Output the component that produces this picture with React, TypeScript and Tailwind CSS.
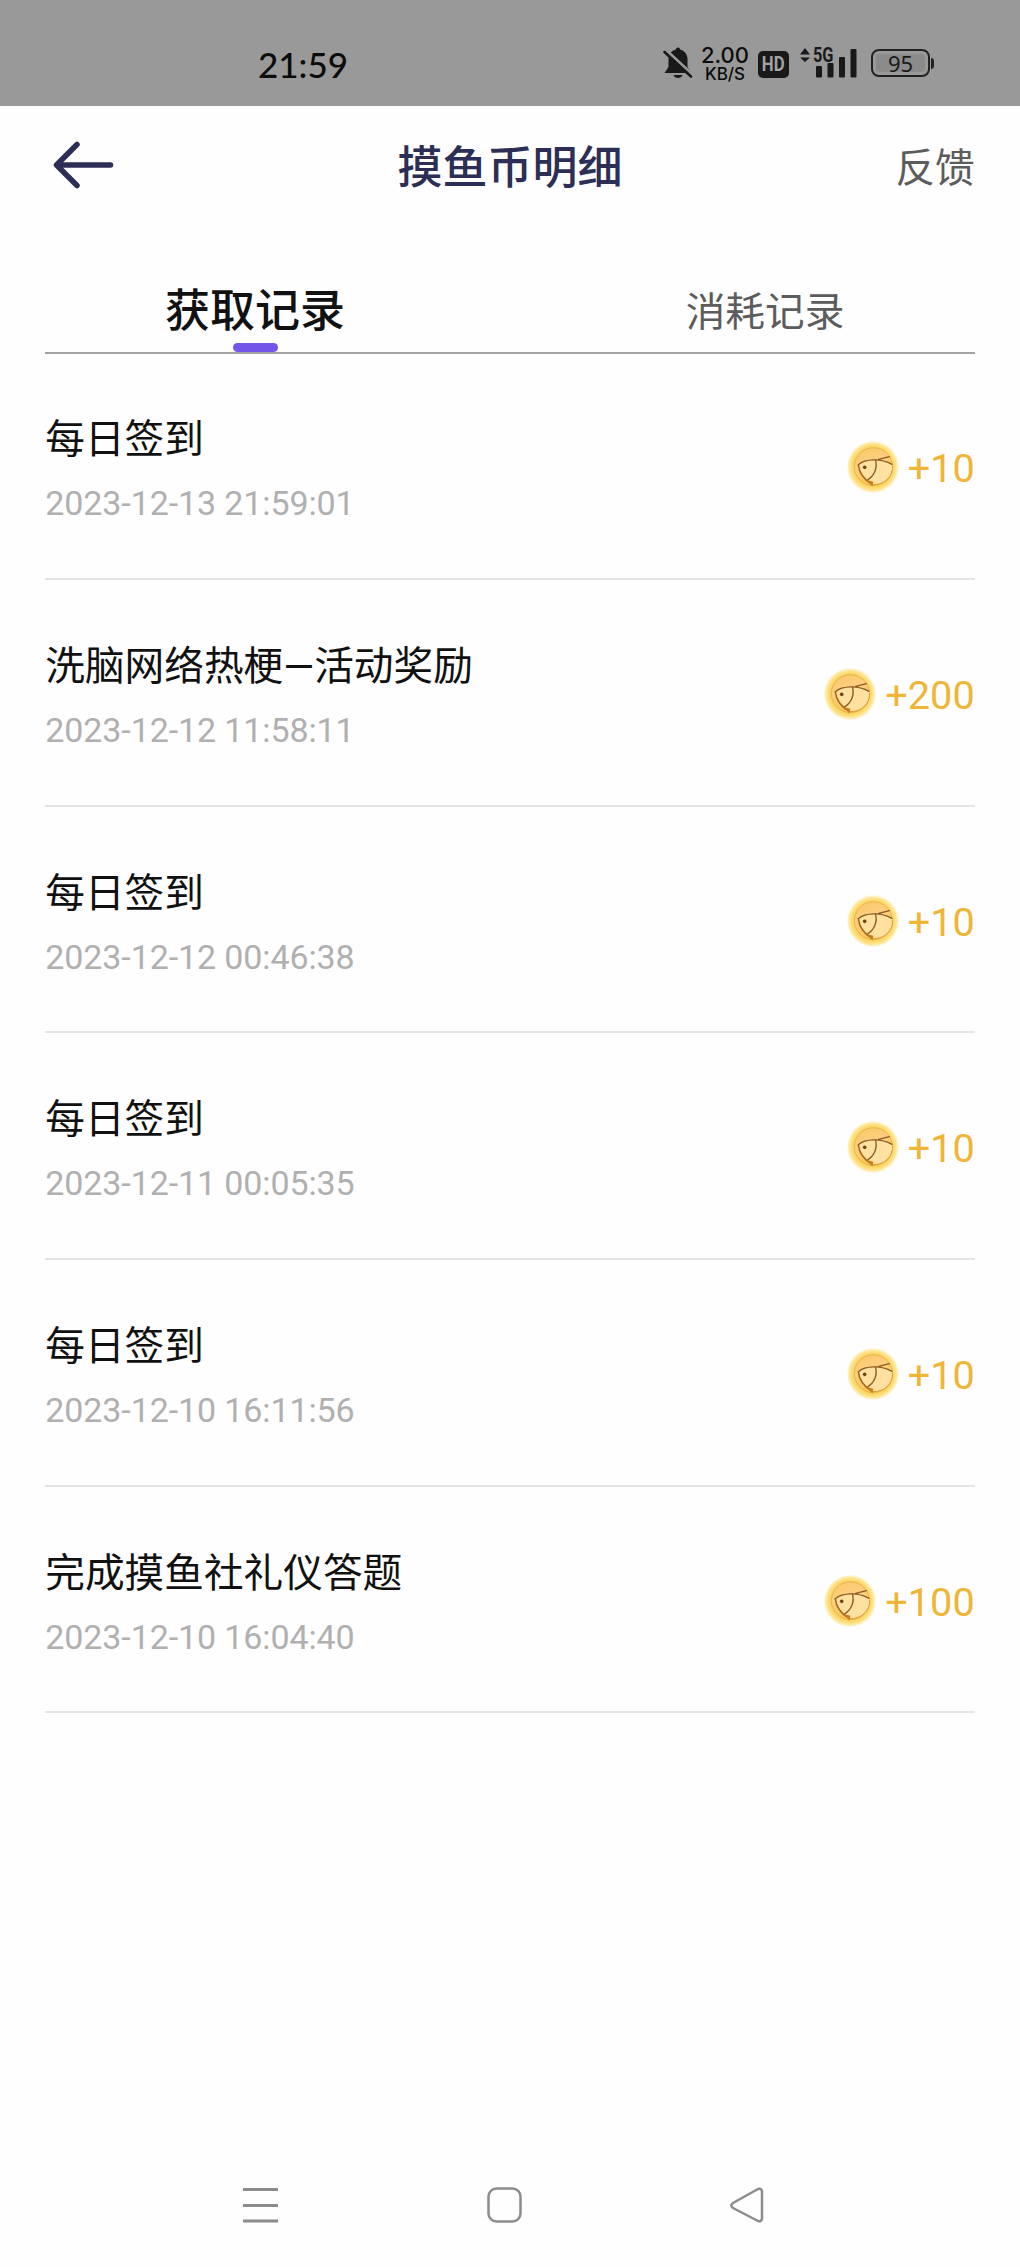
const records = [
  { title: "每日签到", time: "2023-12-13 21:59:01", amount: "+10" },
  { title: "洗脑网络热梗—活动奖励", time: "2023-12-12 11:58:11", amount: "+200" },
  { title: "每日签到", time: "2023-12-12 00:46:38", amount: "+10" },
  { title: "每日签到", time: "2023-12-11 00:05:35", amount: "+10" },
  { title: "每日签到", time: "2023-12-10 16:11:56", amount: "+10" },
  { title: "完成摸鱼社礼仪答题", time: "2023-12-10 16:04:40", amount: "+100" },
];

function StatusBar() {
  return (
    <header className="flex h-[105.5px] items-start bg-[#999999] text-[#0c0c0c]">
      <span className="ml-[258px] mt-[40px] w-[92px] whitespace-nowrap font-['Lato'] text-[35px] font-medium leading-[48px]">
        21:59
      </span>
      <svg className="ml-[312px] mt-[46px] shrink-0" width="32" height="34" viewBox="0 0 32 34">
        <path d="M16 1.5c1.4 0 2 .8 2 2 4.500 1 7.500 5 7.500 9.500v8l4 6H2.500l4-6v-8C6.500 8.500 9.500 4.500 14 3.500c0-1.200.6-2 2-2Z" fill="#191919" />
        <path d="M11.500 29h9c-1 4-8 4-9 0Z" fill="#191919" />
        <path d="M4 4 31 29" stroke="#999999" strokeWidth="3" />
        <path d="M2.500 6 29 30.500" stroke="#191919" strokeWidth="2.600" strokeLinecap="round" />
      </svg>
      <div className="ml-[6px] mt-[44px] flex w-[50px] flex-col items-center whitespace-nowrap font-['Inter'] font-medium">
        <span className="text-[22px] leading-[22px]">2.00</span>
        <span className="text-[17px] leading-[16px]">KB/S</span>
      </div>
      <div className="ml-[8px] mt-[51px] flex h-[27px] w-[31px] items-center justify-center rounded-[5px] bg-[#191919] font-['Roboto'] text-[21px] font-bold leading-none text-[#a3a3a3]">
        <span className="block scale-x-[.8]">HD</span>
      </div>
      <svg className="ml-[10px] mt-[44px] shrink-0" width="60" height="36" viewBox="0 0 60 36">
        <path d="M1 10.500 6 4l5 6.500ZM1 13.500h10L6 18Z" fill="#191919" />
        <text x="14" y="18" fontFamily="Roboto" fontSize="20" fontWeight="700" textLength="20.500" lengthAdjust="spacingAndGlyphs" fill="#191919">
          5G
        </text>
        <rect x="17" y="22" width="6" height="11.500" rx="1" fill="#191919" />
        <rect x="28.500" y="19" width="6" height="14.500" rx="1" fill="#191919" />
        <rect x="40" y="13" width="6" height="20.500" rx="1" fill="#191919" />
        <rect x="51.500" y="5" width="6" height="28.500" rx="1" fill="#191919" />
      </svg>
      <div className="ml-[12px] mt-[49px] flex items-center">
        <div className="flex h-[28px] w-[59px] items-center justify-center rounded-[8px] border-2 border-[#222] p-[3px]">
          <span className="flex h-full w-full items-center justify-center rounded-[3px] bg-[#8b8b8b] font-['Noto_Sans'] text-[22px] leading-none text-[#191919]">
            95
          </span>
        </div>
        <i className="ml-[1px] h-[11px] w-[3px] rounded-r bg-[#222]" />
      </div>
    </header>
  );
}

function Coin() {
  return (
    <svg width="52" height="52" viewBox="141 91 156 156" className="shrink-0">
      <defs>
        <radialGradient id="rim">
          <stop offset="0" stopColor="#fbd469" />
          <stop offset=".78" stopColor="#fcd766" />
          <stop offset=".9" stopColor="#fde694" />
          <stop offset="1" stopColor="#fffaf0" />
        </radialGradient>
        <linearGradient id="face" x1="0" y1="0" x2=".4" y2="1">
          <stop offset="0" stopColor="#fbc765" />
          <stop offset=".5" stopColor="#fdcf80" />
          <stop offset="1" stopColor="#fcc452" />
        </linearGradient>
      </defs>
      <circle cx="219" cy="169" r="78" fill="url(#rim)" />
      <circle cx="220" cy="168" r="57" fill="url(#face)" stroke="#e9b34b" strokeWidth="3" />
      <path d="M175 162C195 146 240 140 278 162C280 195 252 224 217 222C194 208 177 188 175 162Z" fill="#fee0a0" />
      <path d="M175 162C177 188 194 208 217 222" fill="none" stroke="#a5661a" strokeWidth="4.500" />
      <path d="M217 222C254 224 280 198 278 165" fill="none" stroke="#dc9c3a" strokeWidth="3" />
      <path d="M175 162C196 144 242 142 276 161M236 146Q252 142 268 138" fill="none" stroke="#8a5a22" strokeWidth="4" strokeLinecap="round" />
      <path d="M226 146C234 172 222 196 202 208" fill="none" stroke="#8a5a22" strokeWidth="4" />
      <path d="M203 209 220 213 217 228Z" fill="#c97f1c" />
      <circle cx="194" cy="170" r="5.500" fill="#75420f" />
    </svg>
  );
}

export default function App() {
  return (
    <div className="flex h-[2267px] w-[1020px] flex-col overflow-hidden bg-[#fefefe] font-['Roboto','Noto_Sans_CJK_SC',sans-serif]">
      <StatusBar />
      <div className="grid h-[122px] grid-cols-3 items-center px-[45.300px]">
        <svg className="ml-[7px] -mt-[4px]" width="64" height="50" viewBox="0 0 64 50" fill="none" stroke="#2c2e55" strokeWidth="5.500" strokeLinecap="round" strokeLinejoin="round">
          <path d="M25 4.500 4.500 25 25 45.500M5 25h53.500" />
        </svg>
        <h1 className="mt-[5px] whitespace-nowrap text-center text-[45px] font-medium leading-[60px] text-[#2c2e55]">摸鱼币明细</h1>
        <span className="mt-[4px] text-right text-[39.670px] leading-[56px] text-[#5c5c5c]">反馈</span>
      </div>
      <nav className="mx-[45.300px] mt-[38px] h-[88px] border-b-2 border-[#a2a2a2]">
        <div className="-mx-[45.300px] grid h-full grid-cols-2 text-center">
          <div className="flex flex-col items-center justify-between">
            <span className="mt-[16px] text-[45px] font-medium leading-[60px] text-[#111]">获取记录</span>
            <i className="h-[9px] w-[45px] rounded-full bg-[#7355ea]" />
          </div>
          <span className="mt-[19px] text-[39.670px] leading-[56px] text-[#5c5c5c]">消耗记录</span>
        </div>
      </nav>
      <main className="px-[45.300px]">
        {records.map((r) => (
          <div key={r.time} className="flex h-[226.670px] items-center justify-between border-b-2 border-[#e5e5e5]">
            <div className="flex flex-col pt-[8px]">
              <span className="text-[39.670px] leading-[56px] text-[#111]">{r.title}</span>
              <time className="mt-[11px] text-[34px] leading-[48px] tracking-[-0.1px] text-[#b0b0b0]">{r.time}</time>
            </div>
            <div className="flex items-center gap-[9px] pt-[3px]">
              <Coin />
              <span className="mt-[4px] text-[39.670px] leading-[48px] text-[#efb537]">{r.amount}</span>
            </div>
          </div>
        ))}
      </main>
      <footer className="mt-auto flex h-[125px] items-center justify-between pl-[243px] pr-[254px]">
        <svg width="36" height="36" viewBox="0 0 36 36" stroke="#8c8c8c" strokeWidth="3">
          <path d="M0 2.500h35M0 18.500h35M0 34h35" />
        </svg>
        <svg width="36" height="36" viewBox="0 0 36 36" fill="none" stroke="#8c8c8c" strokeWidth="2.500">
          <rect x="1.500" y="1.500" width="32" height="33" rx="8" />
        </svg>
        <svg width="36" height="36" viewBox="0 0 36 36" fill="none" stroke="#8c8c8c" strokeWidth="2.500" strokeLinejoin="round">
          <path d="M28 2 3 16q-3.500 2.500 0 5L28 34q3.500 1 4-2.500V4.500q-.5-3.500-4-2.500Z" />
        </svg>
      </footer>
    </div>
  );
}
